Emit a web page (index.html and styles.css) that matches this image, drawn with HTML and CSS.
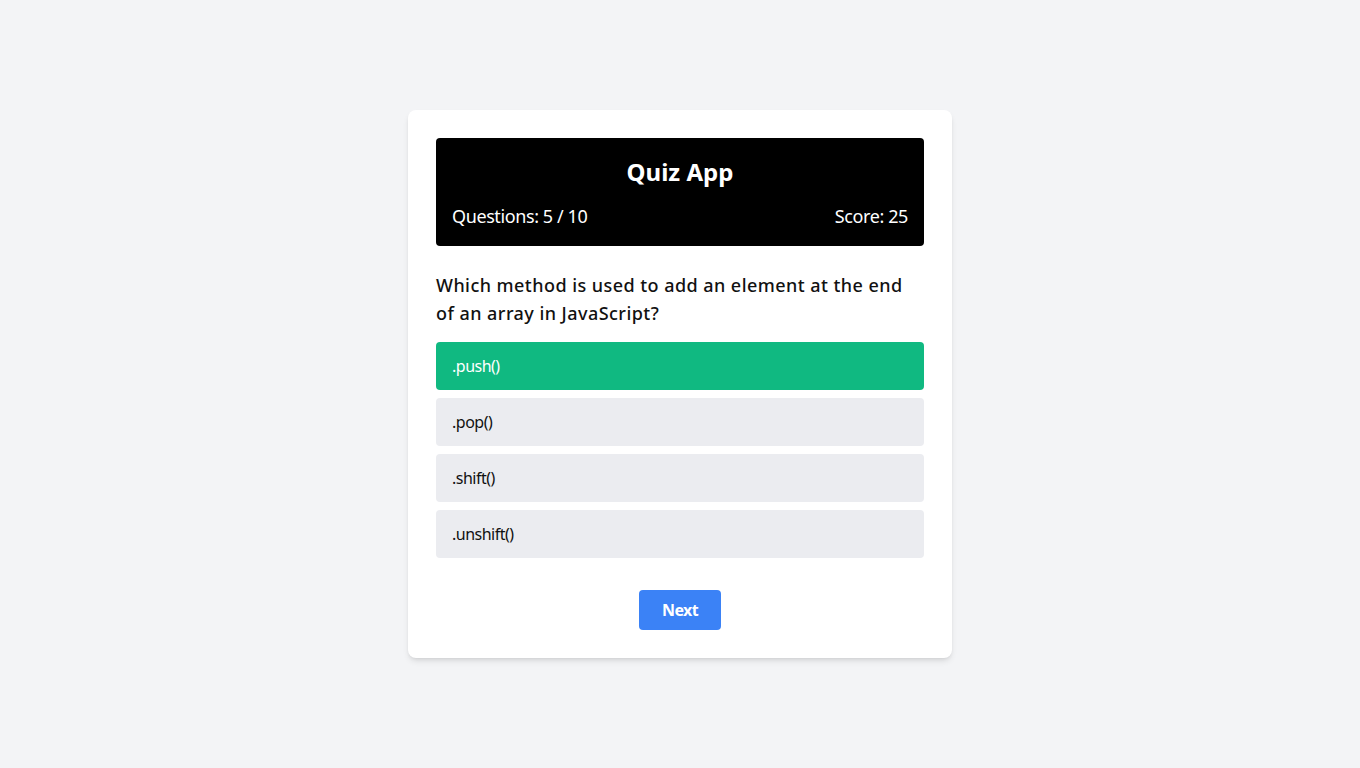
FILE: index.html
```html
<!DOCTYPE html>
<html lang="en">
<head>
<meta charset="utf-8">
<title>Quiz App</title>
<link rel="stylesheet" href="styles.css">
</head>
<body>
<main class="page">
  <section class="card">
    <header class="quiz-header">
      <h1 class="title">Quiz App</h1>
      <div class="stats">
        <span>Questions: 5 / 10</span>
        <span>Score: 25</span>
      </div>
    </header>
    <h2 class="question">Which method is used to add an element at the end of an array in JavaScript?</h2>
    <div class="options">
      <button class="option correct">.push()</button>
      <button class="option">.pop()</button>
      <button class="option">.shift()</button>
      <button class="option">.unshift()</button>
    </div>
    <div class="actions">
      <button class="next">Next</button>
    </div>
  </section>
</main>
</body>
</html>
```

FILE: styles.css
```css
* { box-sizing: border-box; }
html, body { margin: 0; padding: 0; }
body {
  background: #f3f4f6;
  font-family: "Noto Sans", "Open Sans", sans-serif;
  color: #111827;
}
.page {
  min-height: 100vh;
  display: flex;
  align-items: center;
  justify-content: center;
}
.card {
  width: 544px;
  background: #ffffff;
  border-radius: 8px;
  padding: 28px;
  box-shadow: 0 4px 6px -1px rgba(0,0,0,0.1), 0 2px 4px -2px rgba(0,0,0,0.1);
}
.quiz-header {
  background: #000000;
  color: #ffffff;
  border-radius: 4px;
  padding: 16px;
}
.title {
  margin: 0;
  font-size: 24px;
  line-height: 32px;
  font-weight: 700;
  text-align: center;
  position: relative;
  top: 2px;
}
.stats {
  margin-top: 16px;
  display: flex;
  justify-content: space-between;
  font-size: 18px;
  line-height: 28px;
  letter-spacing: -0.4px;
}
.question {
  margin: 24px 0 16px;
  font-size: 18px;
  line-height: 28px;
  font-weight: 500;
  letter-spacing: 0.45px;
  color: #111111;
  position: relative;
  top: 1px;
}
.options {
  display: flex;
  flex-direction: column;
  gap: 8px;
}
.option {
  display: block;
  width: 100%;
  text-align: left;
  border: none;
  border-radius: 4px;
  background: #ebecf0;
  color: #111111;
  font-family: inherit;
  font-size: 16px;
  line-height: 24px;
  letter-spacing: -0.5px;
  padding: 12px 16px;
}
.option.correct {
  background: #10b981;
  color: #ffffff;
}
.actions {
  margin-top: 32px;
  display: flex;
  justify-content: center;
}
.next {
  border: none;
  border-radius: 4px;
  background: #3b82f6;
  color: #ffffff;
  font-family: inherit;
  font-size: 16px;
  line-height: 24px;
  font-weight: 700;
  letter-spacing: -0.6px;
  padding: 8px 0;
  width: 82px;
  text-align: center;
}
```
